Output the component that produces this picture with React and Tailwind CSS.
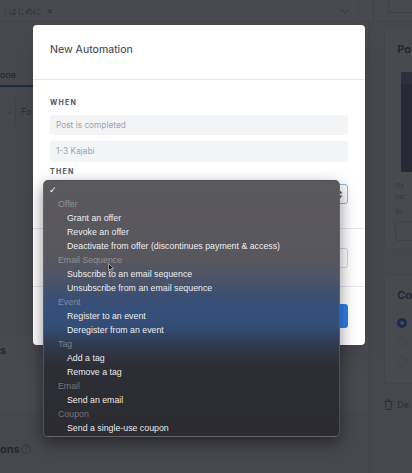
import React from "react";

const groups = [
  { label: "Offer", items: ["Grant an offer", "Revoke an offer", "Deactivate from offer (discontinues payment & access)"] },
  { label: "Email Sequence", items: ["Subscribe to an email sequence", "Unsubscribe from an email sequence"] },
  { label: "Event", items: ["Register to an event", "Deregister from an event"] },
  { label: "Tag", items: ["Add a tag", "Remove a tag"] },
  { label: "Email", items: ["Send an email"] },
  { label: "Coupon", items: ["Send a single-use coupon"] },
];

function Page() {
  return (
    <div className="flex h-full w-full flex-col bg-[#f3f4f6] font-['Inter',sans-serif] text-[#374151]">
      {/* top bar */}
      <div className="flex h-[22px] shrink-0 items-stretch border-b border-[#e5e7eb] bg-white">
        <div className="flex flex-1 items-center gap-[6px] pl-[4px] text-[8px] text-[#6b7280]">
          <span>: はじめに</span>
          <span className="text-[10px]">×</span>
          <span className="ml-auto mr-[8px] text-[#9ca3af]">
            <svg width="10" height="6" viewBox="0 0 10 6"><path d="M1 1l4 4 4-4" fill="none" stroke="currentColor" strokeWidth="1" /></svg>
          </span>
        </div>
        <div className="w-[15px] border-l border-[#e5e7eb]" />
        <div className="w-[39px] border-l border-[#d1d5db] pl-[14px]">
          <div className="h-[13px] border-b border-l border-[#d1d5db]" />
        </div>
      </div>
      <div className="flex flex-1">
        {/* left column */}
        <div className="flex w-[373px] flex-col border-r border-[#d1d5db]">
          <div className="mt-[47px] flex h-[19px] items-end border-b border-[#e5e7eb]">
            <div className="flex h-[19px] w-[33px] items-start border-b-2 border-[#2563eb] text-[9px] text-[#374151]">one</div>
          </div>
          <div className="mt-[12px] flex h-[24px] items-stretch">
            <div className="flex w-[16px] items-center justify-end border-r border-[#d1d5db] pr-[3px] text-[7px] text-[#9ca3af]">⌄</div>
            <div className="flex items-center pl-[5px] text-[9px] text-[#6b7280]">Fo</div>
          </div>
          <div className="mt-[213px] flex h-[76px] flex-col border-b border-[#e5e7eb] bg-white">
            <div className="mt-[5px] text-[11px] font-semibold text-[#374151]">s</div>
          </div>
          <div className="mt-[28px] flex items-center gap-[2px] text-[11px] font-semibold text-[#374151]">
            <span>ons</span>
            <span className="flex h-[10px] w-[10px] items-center justify-center rounded-full border border-[#9ca3af] text-[7px] text-[#9ca3af]">?</span>
          </div>
        </div>
        {/* right column */}
        <div className="flex flex-1 flex-col pl-[14px] pt-[5px]">
          <div className="flex h-[222px] flex-col rounded-l-[4px] border border-r-0 border-[#e5e7eb] bg-white pl-[12px]">
            <div className="mt-[13px] text-[11px] font-semibold text-[#374151]">Po</div>
            <div className="mt-[14px] ml-[4px] flex h-[100px] flex-col bg-[#5d6278]">
              <div className="h-[12px] bg-[#7a84a8]" />
            </div>
            <div className="mt-[8px] ml-[-2px] text-[6px] leading-[11px] text-[#9ca3af]">Pla<br />bac</div>
            <div className="mt-[5px] ml-[-2px] text-[6px] text-[#9ca3af]">Ro</div>
            <div className="mt-[5px] ml-[-2px] h-[20px] rounded-l-[3px] border border-r-0 border-[#d1d5db]" />
          </div>
          <div className="mt-[25px] flex h-[110px] flex-col rounded-l-[4px] border border-r-0 border-[#e5e7eb] bg-white pl-[12px]">
            <div className="mt-[12px] text-[11px] font-semibold text-[#374151]">Co</div>
            <div className="mt-[14px] flex flex-col gap-[9px]">
              <div className="h-[10px] w-[10px] rounded-full border-[3px] border-[#2563eb]" />
              <div className="h-[10px] w-[10px] rounded-full border border-[#d1d5db]" />
              <div className="h-[10px] w-[10px] rounded-full border border-[#d1d5db]" />
            </div>
          </div>
          <div className="mt-[14px] flex items-center gap-[4px] text-[9px] text-[#6b7280]">
            <svg width="9" height="11" viewBox="0 0 9 11" fill="none" stroke="currentColor" strokeWidth="1"><path d="M0.5 2.5h8M3 2.5V1h3v1.5M1.5 2.5l0.5 8h5l0.5-8" /></svg>
            <span>De</span>
          </div>
        </div>
      </div>
    </div>
  );
}

export default function App() {
  return (
    <div className="relative h-[473px] w-[412px] overflow-hidden">
      <Page />
      <div className="absolute inset-0 bg-[rgba(26,29,36,0.8)]" />

      {/* modal */}
      <div className="absolute left-[33px] top-[25px] flex h-[320px] w-[332px] flex-col rounded-[4px] bg-white font-['Inter',sans-serif] shadow-xl">
        <div className="flex h-[55px] shrink-0 items-start border-b border-[#e5e7eb] px-[17px] pt-[18px]">
          <span className="text-[10.6px] leading-[14px] text-[#333a44]">New Automation</span>
        </div>
        <div className="flex flex-col border-b border-[#e5e7eb] px-[17px] pb-[24px] pt-[18px]">
          <div className="text-[7px] font-bold leading-[10px] tracking-[0.18em] text-[#4b5563]">WHEN</div>
          <div className="mt-[7px] flex h-[20px] items-center rounded-[3px] bg-[#f3f4f6] px-[6px] text-[8.3px] text-[#9ca3af]">Post is completed</div>
          <div className="mt-[6px] flex h-[21px] items-center rounded-[3px] bg-[#f3f4f6] px-[6px] text-[8.3px] text-[#9ca3af]">1-3 Kajabi</div>
          <div className="mt-[5px] text-[7px] font-bold leading-[10px] tracking-[0.18em] text-[#4b5563]">THEN</div>
          <div className="mt-[7px] flex h-[20px] items-center justify-end rounded-[3px] border border-[#8fb3ea] px-[4px] text-[#4b5563]">
            <svg width="6" height="9" viewBox="0 0 6 9" fill="currentColor"><path d="M3 0.5L5.5 3.5H0.5Z M3 8.5L0.5 5.5H5.5Z" /></svg>
          </div>
        </div>
        <div className="flex flex-col border-b border-[#e5e7eb] px-[17px] pb-[18px] pt-[19px]">
          <div className="h-[20px] rounded-[3px] border border-[#d1d5db]" />
        </div>
        <div className="flex justify-end px-[17px] pt-[17px]">
          <div className="flex h-[24px] w-[80px] items-center justify-center rounded-[3px] bg-[#2f80ed] text-[9px] font-medium text-white">Save</div>
        </div>
      </div>

      {/* native select menu */}
      <div className="absolute left-[43px] top-[180px] h-[257px] w-[297px] rounded-[5px] border border-[#6c6b70]/60 bg-[linear-gradient(180deg,#5b595e_0%,#58575d_30%,#4e5466_38%,#3c4f72_45%,#34507b_51%,#344d75_57%,#30384b_65%,#2d2d35_73%,#2b2b31_100%)] pt-[2px] font-['Liberation_Sans',sans-serif] text-[8.8px] leading-[14px] shadow-[0_6px_16px_rgba(0,0,0,0.45)]">
        <div className="flex h-[14px] items-center pl-[5px] text-[9px] text-white">✓</div>
        {groups.map((g) => (
          <div key={g.label} className="flex flex-col">
            <div className="h-[14px] pl-[14px] text-white/35">{g.label}</div>
            {g.items.map((it) => (
              <div key={it} className="h-[14px] pl-[23px] text-white/95">{it}</div>
            ))}
          </div>
        ))}
      </div>

      {/* mouse pointer */}
      <div className="absolute left-[108px] top-[263px]">
        <svg width="6" height="9" viewBox="0 0 6 9"><path d="M0.5 0.5v7l1.8-1.6 1.2 2.6 1-0.5-1.2-2.5h2.3z" fill="#111" stroke="#ddd" strokeWidth="0.6" /></svg>
      </div>
    </div>
  );
}
